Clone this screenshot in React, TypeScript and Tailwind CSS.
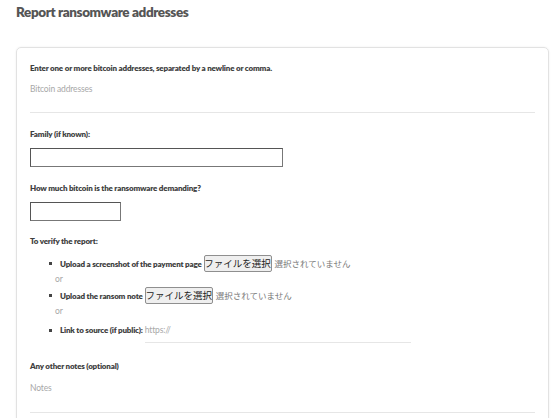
import React from "react";

const cjk = { fontFamily: '"Noto Sans CJK JP", sans-serif' };

const FileBtn = () => (
  <span className="inline-flex items-center ml-[2px] whitespace-nowrap">
    <span className="inline-flex items-center justify-center h-[17px] w-[68px] border border-[#8f8f8f] rounded-[2px] bg-[#efefef] text-[9.5px] text-[#222] leading-none whitespace-nowrap" style={cjk}>
      ファイルを選択
    </span>
    <span className="ml-[3px] text-[8.5px] text-[#777] leading-none whitespace-nowrap" style={cjk}>
      選択されていません
    </span>
  </span>
);

const Bullet = () => <span className="inline-block w-[3px] h-[3px] bg-[#444] mr-[8px] shrink-0" />;

const lbl = "text-[8px] font-extrabold leading-[10px] tracking-[-0.18px] text-[#3f3f3f]";
const ph = "text-[8.5px] text-[#a8a8a8] tracking-[-0.15px]";

export default function App() {
  return (
    <div className="w-[560px] h-[418px] overflow-hidden bg-white text-[#444]" style={{ fontFamily: 'Lato, "Noto Sans", sans-serif' }}>
      <div className="pl-[16px] pt-[3px] h-[47px]">
        <h1 className="text-[13.5px] font-extrabold text-[#555] leading-[18px] tracking-[-0.4px]">Report ransomware addresses</h1>
      </div>
      <div className="ml-[16px] w-[533px] rounded-[5px] border border-[#e2e2e2] shadow-[0_0_2px_rgba(0,0,0,0.08)] pl-[13px] pr-[13px] pt-[15px] h-[400px]">
        <div className={lbl}>Enter one or more bitcoin addresses, separated by a newline or comma.</div>
        <div className={`mt-[11px] ${ph} leading-[10px] h-[29px] border-b border-[#e6e6e6]`}>Bitcoin addresses</div>
        <div className={`mt-[16px] ${lbl}`}>Family (if known):</div>
        <div className="mt-[9px] w-[253px] h-[19px] border border-[#777] border-t-[#555] border-l-[#555]" />
        <div className={`mt-[16px] ${lbl}`}>How much bitcoin is the ransomware demanding?</div>
        <div className="mt-[9px] w-[91px] h-[19px] border border-[#777] border-t-[#555] border-l-[#555]" />
        <div className={`mt-[15px] ${lbl}`}>To verify the report:</div>
        <div className="pl-[19px] mt-[9px]">
          <div className="flex items-center h-[17px]">
            <Bullet />
            <span className={lbl}>Upload a screenshot of the payment page</span>
            <FileBtn />
          </div>
          <div className={`pl-[6px] ${ph} text-[#999] h-[15px] leading-[15px]`}>or</div>
          <div className="flex items-center h-[17px]">
            <Bullet />
            <span className={lbl}>Upload the ransom note</span>
            <FileBtn />
          </div>
          <div className={`pl-[6px] ${ph} text-[#999] h-[15px] leading-[15px]`}>or</div>
          <div className="flex items-start mt-[4px]">
            <div className="flex items-center h-[14px]">
              <Bullet />
              <span className={lbl}>Link to source (if public):</span>
            </div>
            <div className={`ml-[2px] w-[266px] h-[20px] border-b border-[#e6e6e6] ${ph} leading-[14px]`}>https://</div>
          </div>
        </div>
        <div className={`mt-[18px] ${lbl}`}>Any other notes (optional)</div>
        <div className={`mt-[12px] ${ph} leading-[10px] h-[30px] border-b border-[#e6e6e6]`}>Notes</div>
      </div>
    </div>
  );
}
